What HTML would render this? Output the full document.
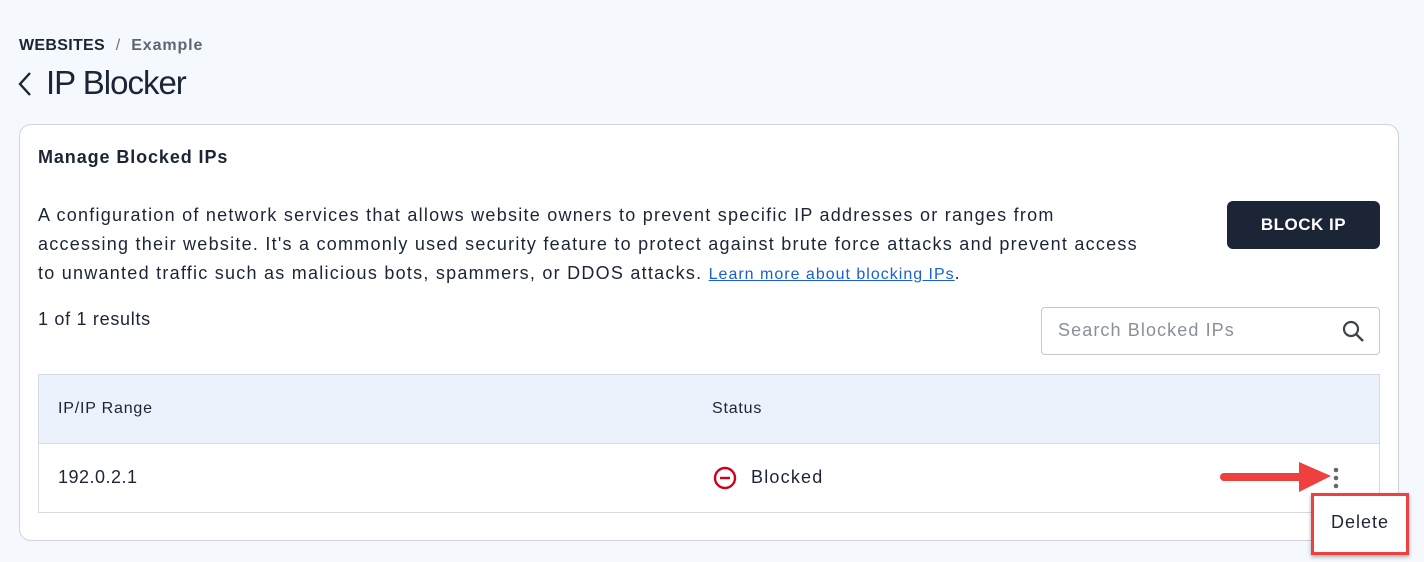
<!DOCTYPE html>
<html><head><style>
body{margin:0;width:1424px;height:562px;background:#f5f8fc;font-family:"Liberation Sans",sans-serif;color:#1b2536;position:relative;overflow:hidden}
.a{position:absolute;white-space:nowrap;letter-spacing:0.8px}
</style></head><body>
<div class="a" style="left:19px;top:37px;font-size:16px;font-weight:bold;color:#1b2536;letter-spacing:0.3px">WEBSITES <span style="color:#6b7280;font-weight:normal;margin:0 6px">/</span> <span style="color:#5f6673;letter-spacing:0.9px">Example</span></div>
<svg class="a" style="left:16px;top:70px" width="20" height="28"><path d="M14 3 L4 14 L14 25" stroke="#1b2536" stroke-width="2.4" fill="none"/></svg>
<div class="a" style="left:46px;top:64px;font-size:33px;letter-spacing:-1px">IP Blocker</div>
<div class="a" style="left:19px;top:124px;width:1378px;height:415px;background:#fff;border:1px solid #cfd4da;border-radius:12px"></div>
<div class="a" style="left:38px;top:147px;font-size:18px;font-weight:bold;letter-spacing:0.9px">Manage Blocked IPs</div>
<div class="a" style="left:38px;top:201px;font-size:18px;line-height:29px;color:#1b2536;letter-spacing:1.25px">A configuration of network services that allows website owners to prevent specific IP addresses or ranges from<br>accessing their website. It's a commonly used security feature to protect against brute force attacks and prevent access<br>to unwanted traffic such as malicious bots, spammers, or DDOS attacks. <span style="color:#1a5fd6;text-decoration:underline;font-size:16px;letter-spacing:1px">Learn more about blocking IPs</span>.</div>
<div class="a" style="left:1227px;top:201px;width:153px;height:48px;background:#1b2536;border-radius:6px;color:#fff;font-weight:bold;font-size:17px;text-align:center;line-height:48px;letter-spacing:0.5px">BLOCK IP</div>
<div class="a" style="left:38px;top:309px;font-size:18px;letter-spacing:0.7px">1 of 1 results</div>
<div class="a" style="left:1041px;top:307px;width:337px;height:46px;border:1px solid #c4c9cf;border-radius:4px;background:#fff"></div>
<div class="a" style="left:1058px;top:320px;font-size:18px;color:#8a9099;letter-spacing:1.1px">Search Blocked IPs</div>
<svg class="a" style="left:1341px;top:319px" width="24" height="24"><circle cx="10" cy="10" r="7" stroke="#3d4450" stroke-width="2.2" fill="none"/><path d="M15 15 L22 22" stroke="#3d4450" stroke-width="2.4"/></svg>
<div class="a" style="left:38px;top:374px;width:1340px;height:137px;border:1px solid #d6dbe1;background:#fff"></div>
<div class="a" style="left:39px;top:375px;width:1340px;height:68px;background:#ebf2fb;border-bottom:1px solid #d6dbe1"></div>
<div class="a" style="left:58px;top:400px;font-size:16px;letter-spacing:0.8px">IP/IP Range</div>
<div class="a" style="left:712px;top:400px;font-size:16px;letter-spacing:0.8px">Status</div>
<div class="a" style="left:58px;top:467px;font-size:18px;letter-spacing:0.5px">192.0.2.1</div>
<svg class="a" style="left:713px;top:466px" width="24" height="24"><circle cx="12" cy="12" r="10" stroke="#d0021b" stroke-width="2.4" fill="none"/><path d="M7 12 H17" stroke="#d0021b" stroke-width="2.4"/></svg>
<div class="a" style="left:751px;top:467px;font-size:18px;letter-spacing:1.2px">Blocked</div>
<svg class="a" style="left:1218px;top:460px" width="115" height="34"><path d="M6 17 H85" stroke="#ef4040" stroke-width="8" stroke-linecap="round"/><path d="M81 2 L113 16 L81 32 Z" fill="#ef4040"/></svg>
<svg class="a" style="left:1331px;top:466px" width="10" height="24"><circle cx="5" cy="4" r="2.3" fill="#666"/><circle cx="5" cy="12" r="2.3" fill="#666"/><circle cx="5" cy="20" r="2.3" fill="#666"/></svg>
<div class="a" style="left:1311px;top:493px;width:92px;height:56px;background:#fff;border:3px solid #ef4040;box-shadow:0 2px 4px rgba(0,0,0,.3)"></div>
<div class="a" style="left:1331px;top:512px;font-size:18px;color:#1b2536;letter-spacing:1px">Delete</div>
</body></html>
